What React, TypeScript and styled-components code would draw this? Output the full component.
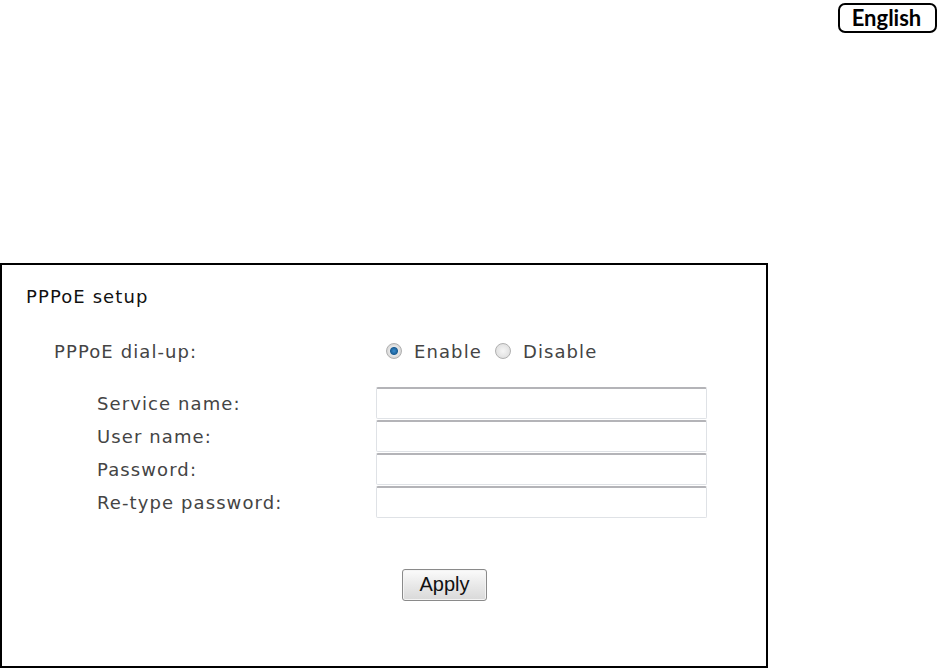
import React from "react";
import styled, { createGlobalStyle } from "styled-components";

const Global = createGlobalStyle`
  html, body { margin: 0; padding: 0; background: #fff; }
  body { font-family: "DejaVu Sans", Verdana, sans-serif; width: 940px; height: 669px; overflow: hidden; }
`;

const Page = styled.div`
  display: flex;
  flex-direction: column;
  width: 940px;
  height: 669px;
`;

const TopBar = styled.div`
  display: flex;
  justify-content: flex-end;
  padding: 3px 3px 0 0;
  height: 263px;
  box-sizing: border-box;
`;

const LangButton = styled.div`
  width: 99px;
  height: 30px;
  box-sizing: border-box;
  border: 2px solid #000;
  border-radius: 7px;
  display: flex;
  align-items: center;
  justify-content: center;
  font-family: Lato, "Open Sans", sans-serif;
  font-weight: 700;
  font-size: 22px;
  color: #000;
  padding: 0 2px 2px 0;
`;

const Frame = styled.section`
  width: 768px;
  height: 405px;
  box-sizing: border-box;
  border: 2px solid #000;
  display: flex;
  flex-direction: column;
  padding: 21px 0 0 0;
  font-size: 18px;
  letter-spacing: 1.1px;
`;

const Title = styled.div`
  line-height: 22px;
  color: #111;
  padding-left: 24px;
`;

const DialRow = styled.div`
  display: flex;
  align-items: center;
  height: 22px;
  margin-top: 32px;
  padding-left: 52px;
  color: #444;
`;

const DialLabel = styled.span`
  width: 332px;
`;

const RadioWrap = styled.label`
  display: flex;
  align-items: center;
  margin-right: 13px;
`;

const RadioDot = styled.span<{ $on?: boolean }>`
  width: 16px;
  height: 16px;
  border-radius: 50%;
  box-sizing: border-box;
  border: 1px solid #b0b0b0;
  margin-right: 12px;
  background: ${(p) =>
    p.$on
      ? "radial-gradient(circle, #3a8ed0 0, #1b5e95 3.5px, #e8e8e8 4.5px, #d0d0d0 8px)"
      : "radial-gradient(circle, #f6f6f6 0, #dedede 8px)"};
`;

const Fields = styled.div`
  display: flex;
  flex-direction: column;
  gap: 1px;
  margin-top: 25px;
  padding-left: 95px;
`;

const FieldRow = styled.div`
  display: flex;
  align-items: center;
  height: 32px;
`;

const FieldLabel = styled.span`
  width: 279px;
  color: #444;
`;

const TextInput = styled.input`
  width: 331px;
  height: 32px;
  box-sizing: border-box;
  border: 1px solid #dfe2e6;
  border-top: 2px solid #b4b4b8;
  border-radius: 2px;
  background: #fff;
  outline: none;
  margin: 0;
`;

const ButtonRow = styled.div`
  display: flex;
  padding-left: 400px;
  margin-top: 51px;
`;

const ApplyButton = styled.button`
  width: 85px;
  height: 32px;
  border: 1px solid #8a8a8a;
  border-radius: 3px;
  background: linear-gradient(#fbfbfb, #e9e9e9 50%, #d9d9d9);
  font-family: "Liberation Sans", Arial, sans-serif;
  font-size: 20px;
  letter-spacing: 0;
  color: #111;
  padding: 0 0 2px 0;
  box-shadow: inset 0 0 0 1px #f4f4f4;
`;

export default function App() {
  return (
    <Page>
      <Global />
      <TopBar>
        <LangButton>English</LangButton>
      </TopBar>
      <Frame>
        <Title>PPPoE setup</Title>
        <DialRow>
          <DialLabel>PPPoE dial-up:</DialLabel>
          <RadioWrap>
            <RadioDot $on />
            Enable
          </RadioWrap>
          <RadioWrap>
            <RadioDot />
            Disable
          </RadioWrap>
        </DialRow>
        <Fields>
          {["Service name:", "User name:", "Password:", "Re-type password:"].map((l) => (
            <FieldRow key={l}>
              <FieldLabel>{l}</FieldLabel>
              <TextInput type={l.includes("assword") ? "password" : "text"} />
            </FieldRow>
          ))}
        </Fields>
        <ButtonRow>
          <ApplyButton>Apply</ApplyButton>
        </ButtonRow>
      </Frame>
    </Page>
  );
}
